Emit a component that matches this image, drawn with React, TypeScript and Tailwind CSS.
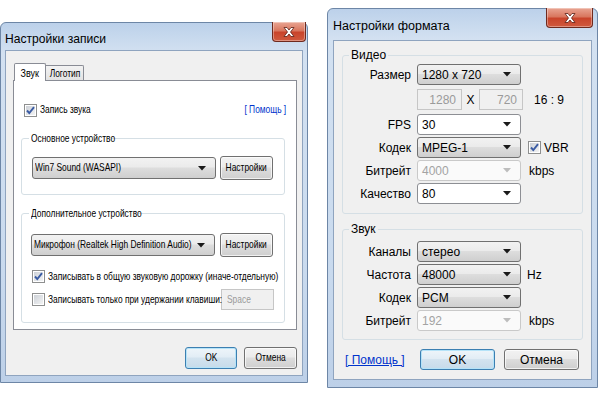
import React from 'react';

const sans = "font-['Liberation_Sans',Arial,sans-serif]";

const btnBg = 'bg-[linear-gradient(#f2f2f2,#ebebeb_45%,#dddddd_50%,#cfcfcf)]';
const frameBg = 'bg-[linear-gradient(#bcd1ea,#d3e1f1_30px,#c9daee_70%,#bdd0e8)]';

// condensed text for the left dialog (its font is a narrow face)
function N({
  children,
  origin = 'left',
  className = 'scale-x-[0.73]',
}: {
  children: React.ReactNode;
  origin?: 'left' | 'center' | 'right';
  className?: string;
}) {
  const o = origin === 'center' ? 'origin-center' : origin === 'right' ? 'origin-right' : 'origin-left';
  return <span className={`inline-block whitespace-nowrap ${o} ${className}`}>{children}</span>;
}

function Arrow({ disabled }: { disabled?: boolean }) {
  return (
    <svg width="8" height="5" viewBox="0 0 8 5" className="shrink-0">
      <path d="M0 0h8L4 4.5z" fill={disabled ? '#bdbdbd' : '#1a1a1a'} />
    </svg>
  );
}

function CloseBtn({ w }: { w: number }) {
  return (
    <div
      className="h-[20px] -mt-px rounded-b-[4px] border border-[#6f2a1e] border-t-0 bg-[linear-gradient(#e9a593,#d9775f_45%,#c9442b_55%,#d05a3e)] shadow-[inset_0_0_0_1px_rgba(255,255,255,0.35)] flex items-center justify-center"
      style={{ width: w }}
    >
      <svg width="12" height="10" viewBox="0 0 12 10">
        <path
          d="M1 0.5h3l2 2.5 2-2.5h3l-3.5 4.5 3.5 4.5h-3l-2-2.5-2 2.5h-3l3.5-4.5z"
          fill="#fff"
          stroke="#5a2015"
          strokeWidth="0.8"
        />
      </svg>
    </div>
  );
}

function Check({ checked }: { checked?: boolean }) {
  return (
    <span className="w-[13px] h-[13px] border border-[#8e8f8f] bg-white p-px shrink-0 flex">
      <span className="flex-1 bg-[linear-gradient(135deg,#cdd1d7,#f2f3f4)] flex items-center justify-center">
        {checked && (
          <svg width="9" height="9" viewBox="0 0 9 9">
            <path d="M1 4.5l2.3 2.6L8 1.2" fill="none" stroke="#3a5ba3" strokeWidth="1.9" />
          </svg>
        )}
      </span>
    </span>
  );
}

function Combo({
  value,
  w,
  h = 21,
  kind = 'button',
  narrow,
}: {
  value: string;
  w: number;
  h?: number;
  kind?: 'button' | 'edit' | 'disabled';
  narrow?: boolean;
}) {
  const look =
    kind === 'button'
      ? `border-[#707070] ${btnBg} text-black`
      : kind === 'edit'
      ? 'border-[#8d8f94] bg-white text-black'
      : 'border-[#c9c9c9] bg-[#fafafa] text-[#a3a3a3]';
  return (
    <div
      className={`shrink-0 rounded-[3px] border ${look} flex items-center justify-between ${narrow ? 'pl-[2px]' : 'pl-[4px]'} pr-[9px]`}
      style={{ width: w, height: h }}
    >
      {narrow ? (
        <span className="flex-1 min-w-0">
          <N>{value}</N>
        </span>
      ) : (
        <span className="whitespace-nowrap">{value}</span>
      )}
      <Arrow disabled={kind === 'disabled'} />
    </div>
  );
}

function Field({ children, w, h = 21, right }: { children: React.ReactNode; w: number; h?: number; right?: boolean }) {
  return (
    <div
      className={`shrink-0 border border-[#c6c6c6] bg-[#f0f0f0] text-[#9a9a9a] flex items-center px-[5px] ${right ? 'justify-end' : ''}`}
      style={{ width: w, height: h }}
    >
      {children}
    </div>
  );
}

function Btn({ children, w, h, def }: { children: React.ReactNode; w: number; h: number; def?: boolean }) {
  const look = def
    ? 'border-[#3c7fb1] bg-[linear-gradient(#eef5fa,#e2edf5_45%,#d3e3ef_50%,#c6dbea)] shadow-[inset_0_0_0_1px_#b5e3f8]'
    : `border-[#707070] ${btnBg} shadow-[inset_0_0_0_1px_rgba(255,255,255,0.7)]`;
  return (
    <div
      className={`shrink-0 rounded-[3px] border ${look} flex items-center justify-center text-black`}
      style={{ width: w, height: h }}
    >
      {children}
    </div>
  );
}

function Group({
  title,
  className,
  legendClass = 'ml-[6px]',
  legendW,
  children,
}: {
  title: React.ReactNode;
  className: string;
  legendClass?: string;
  legendW?: number;
  children: React.ReactNode;
}) {
  return (
    <fieldset className={`min-w-0 border border-[#d5dfe5] rounded-[3px] ${className}`}>
      <legend className={`px-[2px] text-black leading-[14px] ${legendClass}`} style={legendW ? { width: legendW } : undefined}>
        {title}
      </legend>
      {children}
    </fieldset>
  );
}

function RecordWindow() {
  return (
    <div className={`w-[308px] h-[361px] mt-[22px] shrink-0 rounded-t-[6px] border border-[#6d86a6] ${frameBg} flex flex-col px-[4px] pb-[6px] ${sans} text-[11.5px]`}>
      <div className="h-[27px] flex justify-between shrink-0">
        <span className="mt-[6px] text-[13px] text-black">
          <N className="scale-x-[0.93]">Настройки записи</N>
        </span>
        <div className="-mr-[3px]">
          <CloseBtn w={34} />
        </div>
      </div>
      <div className="flex-1 bg-[#f0f0f0] border border-[#8fa4bf] flex flex-col pl-[7px] pr-[5px]">
        <div className="flex items-end mt-[12px] ml-px h-[17px]">
          <div className="h-[18px] w-[32px] -mb-px relative z-10 bg-white border border-b-0 border-[#898c95] rounded-t-[2px] flex justify-center pt-[1px]">
            <N origin="center" className="scale-x-[0.78]">Звук</N>
          </div>
          <div className="h-[15px] w-[38px] bg-[linear-gradient(#f3f3f3,#e3e3e3)] border border-b-0 border-l-0 border-[#898c95] rounded-tr-[2px] flex justify-center leading-[14px]">
            <N origin="center">Логотип</N>
          </div>
        </div>
        <div className="h-[250px] bg-white border border-[#898c95] flex flex-col">
          <div className="flex items-center justify-between h-[14px] mt-[22px] pl-[10px] pr-[10px]">
            <div className="flex items-center gap-[3px]">
              <Check checked />
              <N>Запись звука</N>
            </div>
            <span className="text-[#0033cc] underline">
              <N origin="right">[ Помощь ]</N>
            </span>
          </div>
          <Group
            title={<N>Основное устройство</N>}
            legendW={82}
            legendClass="-ml-[3px]"
            className="mt-[14px] ml-[7px] mr-[11px] pl-[10px] pr-[10px] pt-[11px] pb-[14px]"
          >
            <div className="flex items-center gap-[4px]">
              <Combo value="Win7 Sound (WASAPI)" w={184} h={22} narrow />
              <Btn w={53} h={24}>
                <N origin="center">Настройки</N>
              </Btn>
            </div>
          </Group>
          <Group
            title={<N>Дополнительное устройство</N>}
            legendW={109}
            legendClass="-ml-[2px]"
            className="mt-[11px] ml-[7px] mr-[11px] pl-[9px] pr-[10px] pt-[13px] pb-[12px]"
          >
            <div className="flex items-center gap-[5px]">
              <Combo value="Микрофон (Realtek High Definition Audio)" w={184} h={22} narrow />
              <Btn w={53} h={24}>
                <N origin="center">Настройки</N>
              </Btn>
            </div>
            <div className="flex items-center gap-[3px] mt-[13px] pl-px h-[13px]">
              <Check checked />
              <span className="flex-1 min-w-0">
                <N>Записывать в общую звуковую дорожку (иначе-отдельную)</N>
              </span>
            </div>
            <div className="flex items-center mt-[6px] pl-px">
              <Check />
              <span className="flex-1 min-w-0 ml-[3px]">
                <N>Записывать только при удержании клавиши:</N>
              </span>
              <Field w={53}>
                <N>Space</N>
              </Field>
            </div>
          </Group>
        </div>
        <div className="flex justify-end gap-[7px] mt-[17px]">
          <Btn w={52} h={22} def>
            <N origin="center">OK</N>
          </Btn>
          <Btn w={53} h={22}>
            <N origin="center">Отмена</N>
          </Btn>
        </div>
      </div>
    </div>
  );
}

function Row({ label, children, className = '' }: { label?: string; children: React.ReactNode; className?: string }) {
  return (
    <div className={`flex items-center h-[21px] ${className}`}>
      <span className="w-[68px] pr-[6px] text-right shrink-0 box-content">{label}</span>
      <div className="flex items-center">{children}</div>
    </div>
  );
}

function FormatWindow() {
  return (
    <div className={`w-[271px] h-[380px] mt-[8px] ml-[19px] shrink-0 rounded-t-[6px] border border-[#6d86a6] ${frameBg} flex flex-col px-[5px] pb-[7px] ${sans} text-[12px]`}>
      <div className="h-[31px] flex justify-between shrink-0">
        <span className="mt-[8px] text-[12.5px] text-black">Настройки формата</span>
        <div className="-mr-px">
          <CloseBtn w={47} />
        </div>
      </div>
      <div className="flex-1 bg-[#f0f0f0] border border-[#8fa4bf] flex flex-col">
        <Group title="Видео" className="mt-[7px] mx-[8px] pl-0 pt-[2px] pb-[9px]">
          <div className="flex flex-col gap-[2px]">
            <Row label="Размер">
              <Combo value="1280 x 720" w={104} />
            </Row>
            <Row className="mt-[2px]">
              <Field w={45} right>1280</Field>
              <span className="w-[17px] text-center">X</span>
              <Field w={44} right>720</Field>
              <span className="ml-[11px]">16 : 9</span>
            </Row>
            <Row label="FPS" className="mt-[2px]">
              <Combo value="30" w={104} kind="edit" />
            </Row>
            <Row label="Кодек">
              <Combo value="MPEG-1" w={104} />
              <span className="ml-[7px] flex items-center gap-[3px]">
                <Check checked />
                VBR
              </span>
            </Row>
            <Row label="Битрейт">
              <Combo value="4000" w={104} kind="disabled" />
              <span className="ml-[8px]">kbps</span>
            </Row>
            <Row label="Качество">
              <Combo value="80" w={104} kind="edit" />
            </Row>
          </div>
        </Group>
        <Group title="Звук" className="mt-[8px] mx-[8px] pt-[5px] pb-[8px]">
          <div className="flex flex-col gap-[2px]">
            <Row label="Каналы">
              <Combo value="стерео" w={104} />
            </Row>
            <Row label="Частота">
              <Combo value="48000" w={104} />
              <span className="ml-[6px]">Hz</span>
            </Row>
            <Row label="Кодек">
              <Combo value="PCM" w={104} />
            </Row>
            <Row label="Битрейт">
              <Combo value="192" w={104} kind="disabled" />
              <span className="ml-[8px]">kbps</span>
            </Row>
          </div>
        </Group>
        <div className="flex items-center mt-[9px] pl-[11px]">
          <span className="text-[#0033cc] underline w-[75px]">[ Помощь ]</span>
          <Btn w={75} h={21} def>OK</Btn>
          <div className="ml-[9px]">
            <Btn w={75} h={21}>Отмена</Btn>
          </div>
        </div>
      </div>
    </div>
  );
}

export default function App() {
  return (
    <div className="w-[600px] h-[400px] bg-white flex items-start overflow-hidden">
      <RecordWindow />
      <FormatWindow />
    </div>
  );
}
